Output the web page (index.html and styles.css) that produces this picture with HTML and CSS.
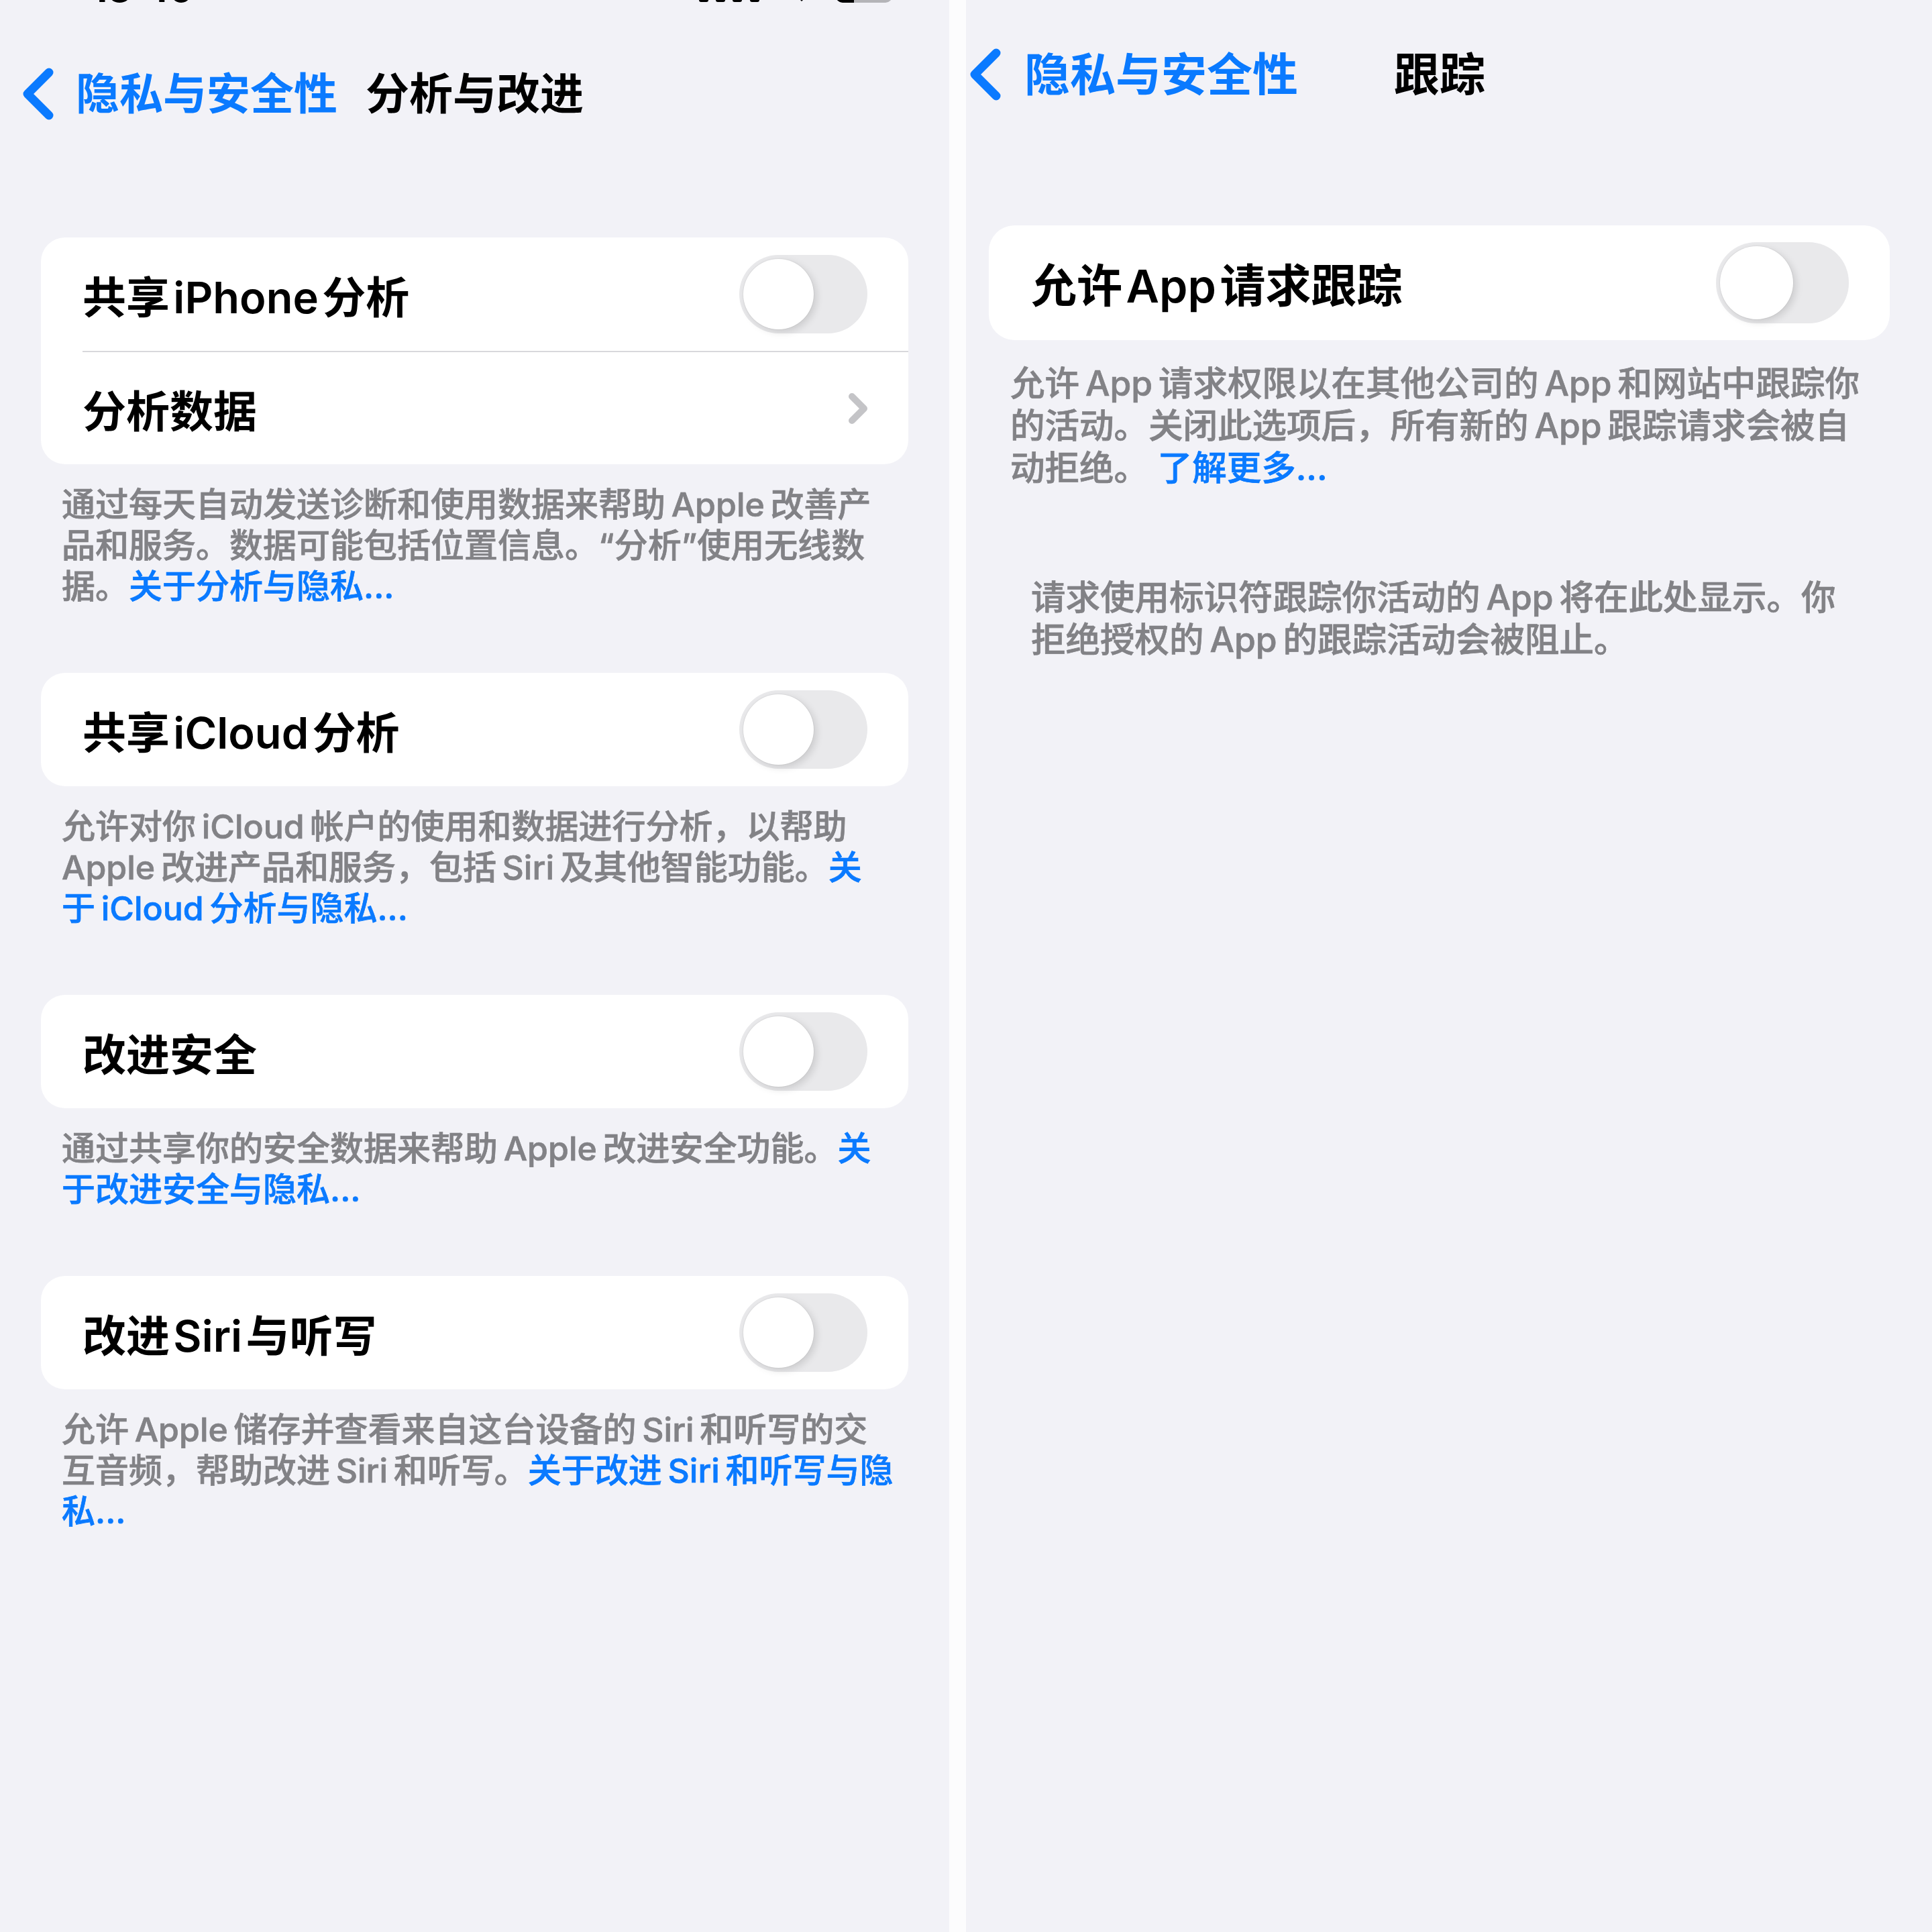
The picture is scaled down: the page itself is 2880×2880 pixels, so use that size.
FILE: index.html
```html
<!DOCTYPE html>
<html lang="zh-CN">
<head>
  <meta charset="UTF-8" />
  <title>隐私与安全性</title>
  <link rel="stylesheet" href="styles.css">
</head>
<body>
  <div class="stage">
    <!-- 分析与改进 -->
    <div class="screen">
      <div class="inner">
        <div class="status">
          <div class="status-bar">
            <span class="clock">13:49</span>
            <svg class="signal" width="90" height="54" viewBox="0 0 90 54">
              <rect x="0" y="32" width="14" height="15" rx="3"/>
              <rect x="25" y="26" width="14" height="21" rx="3"/>
              <rect x="50" y="20" width="14" height="27" rx="3"/>
              <rect x="76" y="14" width="14" height="33" rx="3"/>
            </svg>
            <svg class="wifi" width="30" height="54" viewBox="0 0 30 54">
              <path d="M15 46 L5 36 A14 14 0 0 1 25 36 Z"/>
            </svg>
            <svg class="battery" width="86" height="54" viewBox="0 0 86 54">
              <clipPath id="cell"><rect x="1" y="12" width="84" height="36" rx="10"/></clipPath>
              <g clip-path="url(#cell)">
                <rect x="0" y="0" width="86" height="54" fill="#b4b4b8"/>
                <rect x="0" y="0" width="28" height="54" fill="#000"/>
              </g>
            </svg>
          </div>
        </div>

        <div class="nav">
          <a class="back" href="#">
            <svg viewBox="0 0 50 80"><path d="M41 8 L9 40 L41 72"/></svg>
            <span>隐私与安全性</span>
          </a>
          <div class="title">分析与改进</div>
          <div></div>
        </div>

        <div class="list">
          <div class="card">
            <div class="row">
              <span class="label">共享&hairsp;iPhone&hairsp;分析</span>
              <span class="switch"><span class="knob"></span></span>
            </div>
            <div class="row">
              <span class="label">分析数据</span>
              <svg class="chev" viewBox="0 0 30 48"><path d="M6 6 L24 24 L6 42"/></svg>
            </div>
          </div>
          <p class="footer">通过每天自动发送诊断和使用数据来帮助&thinsp;Apple&thinsp;改善产<br>品和服务。数据可能包括位置信息。“分析”使用无线数<br>据。<a href="#">关于分析与隐私...</a></p>

          <div class="card">
            <div class="row">
              <span class="label">共享&hairsp;iCloud&hairsp;分析</span>
              <span class="switch"><span class="knob"></span></span>
            </div>
          </div>
          <p class="footer">允许对你&thinsp;iCloud&thinsp;帐户的使用和数据进行分析，以帮助<br>Apple&thinsp;改进产品和服务，包括&thinsp;Siri&thinsp;及其他智能功能。<a href="#">关<br>于&thinsp;iCloud&thinsp;分析与隐私...</a></p>

          <div class="card">
            <div class="row">
              <span class="label">改进安全</span>
              <span class="switch"><span class="knob"></span></span>
            </div>
          </div>
          <p class="footer">通过共享你的安全数据来帮助&thinsp;Apple&thinsp;改进安全功能。<a href="#">关<br>于改进安全与隐私...</a></p>

          <div class="card">
            <div class="row">
              <span class="label">改进&hairsp;Siri&hairsp;与听写</span>
              <span class="switch"><span class="knob"></span></span>
            </div>
          </div>
          <p class="footer">允许&thinsp;Apple&thinsp;储存并查看来自这台设备的&thinsp;Siri&thinsp;和听写的交<br>互音频，帮助改进&thinsp;Siri&thinsp;和听写。<a href="#">关于改进&thinsp;Siri&thinsp;和听写与隐<br>私...</a></p>
        </div>
      </div>
    </div>

    <div class="divider"></div>

    <!-- 跟踪 -->
    <div class="screen tracking">
      <div class="inner">
        <div class="nav">
          <a class="back" href="#">
            <svg viewBox="0 0 50 80"><path d="M41 8 L9 40 L41 72"/></svg>
            <span>隐私与安全性</span>
          </a>
          <div class="title">跟踪</div>
          <div></div>
        </div>

        <div class="list">
          <div class="card">
            <div class="row">
              <span class="label">允许&hairsp;App&hairsp;请求跟踪</span>
              <span class="switch"><span class="knob"></span></span>
            </div>
          </div>
          <p class="footer">允许&thinsp;App&thinsp;请求权限以在其他公司的&thinsp;App&thinsp;和网站中跟踪你<br>的活动。关闭此选项后，所有新的&thinsp;App&thinsp;跟踪请求会被自<br>动拒绝。 <a href="#">了解更多...</a></p>
          <p class="footer empty">请求使用标识符跟踪你活动的&thinsp;App&thinsp;将在此处显示。你<br>拒绝授权的&thinsp;App&thinsp;的跟踪活动会被阻止。</p>
        </div>
      </div>
    </div>
  </div>
</body>
</html>
```

FILE: styles.css
```css
body {
  margin: 0;
  width: 2880px;
  height: 2880px;
  overflow: hidden;
  background: #f2f2f7;
  color: #000;
  font-family: "Inter", "Noto Sans CJK SC", sans-serif;
}
a { text-decoration: none; }

.stage {
  display: flex;
  height: 2880px;
}
.screen {
  width: 1415px;
  flex: none;
  overflow: hidden;
  background: #f2f2f7;
}
.divider {
  width: 25px;
  flex: none;
  background: #fcfcfd;
}

/* status bar, only its lower edge shows */
.status {
  height: 10px;
  overflow: hidden;
}
.status-bar {
  display: flex;
  align-items: flex-end;
  height: 54px;
  margin-top: -44px;
  padding: 0 84px 0 136px;
}
.clock {
  font-size: 56px;
  font-weight: 700;
  line-height: 54px;
  margin-right: auto;
}
.status-bar svg { flex: none; fill: #000; }
.wifi { margin-left: 48px; }
.battery { margin-left: 35px; }

/* navigation bar */
.nav {
  display: grid;
  grid-template-columns: 1fr auto 1fr;
  align-items: center;
  height: 80px;
  margin-top: 90px;
  font-size: 65px;
  line-height: 80px;
  white-space: nowrap;
}
.back {
  display: flex;
  align-items: center;
  gap: 31px;
  padding-left: 32px;
  color: #0a7aff;
  font-weight: 600;
}
.back svg {
  width: 50px;
  height: 80px;
  flex: none;
  fill: none;
  stroke: #0a7aff;
  stroke-width: 13;
  stroke-linecap: round;
  stroke-linejoin: round;
}
.title { font-weight: 700; }

/* grouped list */
.list { padding-top: 174px; }
.card {
  margin: 0 61px;
  background: #fff;
  border-radius: 36px;
}
.row {
  display: flex;
  align-items: center;
  justify-content: space-between;
  box-sizing: border-box;
  height: 169px;
  margin-left: 62px;
  padding-right: 61px;
}
.row + .row { border-top: 2px solid #d8d8dc; }
.label {
  font-size: 65px;
  font-weight: 600;
  white-space: nowrap;
}
.chev {
  width: 30px;
  height: 48px;
  margin-right: -1px;
  fill: none;
  stroke: #c4c4c7;
  stroke-width: 10;
  stroke-linecap: round;
  stroke-linejoin: round;
}

.switch {
  display: flex;
  flex: none;
  box-sizing: border-box;
  width: 191px;
  height: 117px;
  padding: 6px;
  border-radius: 60px;
  background: #e9e9eb;
}
.knob {
  width: 105px;
  height: 105px;
  border-radius: 50%;
  background: #fff;
  box-shadow: 0 0 0 1px rgba(0, 0, 0, 0.04), 4px 4px 12px rgba(0, 0, 0, 0.13);
}

/* footnotes under each group; the stroke gives the medium weight */
.footer {
  margin: 0 61px 98px;
  padding: 30px 0 0 31px;
  font-size: 50px;
  font-weight: 500;
  line-height: 61px;
  color: #828286;
  -webkit-text-stroke: 0.7px currentColor;
  white-space: nowrap;
}
.footer a { color: #0a7aff; }

/* second screen: slightly larger scale, left edge cut off */
.screen.tracking { width: 1440px; }
.tracking .inner {
  width: 1468px;
  margin-left: -28px;
}
.tracking .nav {
  margin-top: 71px;
  font-size: 68px;
}
.tracking .back { gap: 33px; }
.tracking .list { padding-top: 185px; }
.tracking .card {
  margin: 0 63px 0 62px;
  border-radius: 38px;
}
.tracking .row {
  height: 171px;
  margin-left: 63px;
  padding-right: 61px;
}
.tracking .label { font-size: 68px; }
.tracking .switch {
  width: 198px;
  height: 121px;
}
.tracking .knob {
  width: 109px;
  height: 109px;
}
.tracking .footer {
  margin: 0 63px 0 62px;
  padding: 33px 0 0 32px;
  font-size: 51.5px;
  line-height: 63px;
}
.tracking .footer.empty {
  margin-top: 130px;
  padding: 0 0 0 63px;
}
```
